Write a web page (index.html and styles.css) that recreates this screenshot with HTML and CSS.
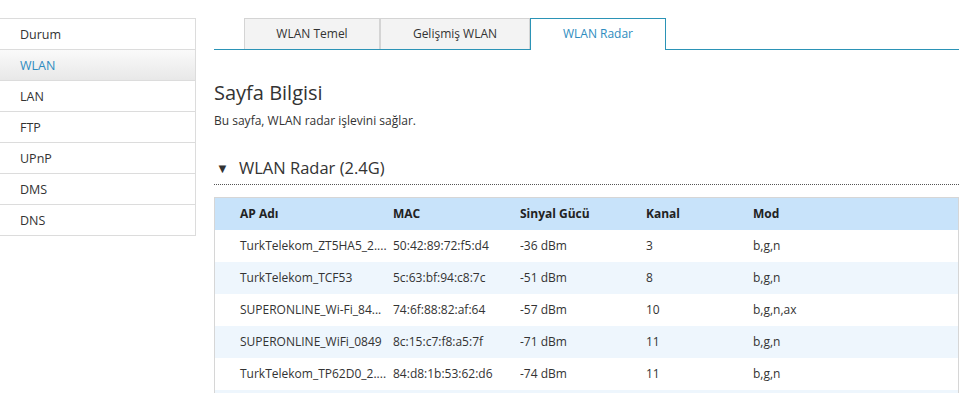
FILE: index.html
```html
<!DOCTYPE html>
<html lang="tr">
<head>
<meta charset="utf-8">
<title>WLAN Radar</title>
<link rel="stylesheet" href="styles.css">
</head>
<body>
<div class="page">
  <nav class="sidebar">
    <div class="nav-item">Durum</div>
    <div class="nav-item active">WLAN</div>
    <div class="nav-item">LAN</div>
    <div class="nav-item">FTP</div>
    <div class="nav-item">UPnP</div>
    <div class="nav-item">DMS</div>
    <div class="nav-item">DNS</div>
  </nav>
  <main class="main">
    <div class="tabs">
      <div class="tab tab-a">WLAN Temel</div>
      <div class="tab tab-b">Gelişmiş WLAN</div>
      <div class="tab tab-c active">WLAN Radar</div>
    </div>
    <h1 class="page-title">Sayfa Bilgisi</h1>
    <p class="page-desc">Bu sayfa, WLAN radar işlevini sağlar.</p>
    <div class="section-head">
      <span class="caret">&#9660;</span>
      <span class="section-title">WLAN Radar (2.4G)</span>
    </div>
    <div class="table">
      <div class="row head">
        <div class="c1">AP Adı</div><div class="c2">MAC</div><div class="c3">Sinyal Gücü</div><div class="c4">Kanal</div><div class="c5">Mod</div>
      </div>
      <div class="row">
        <div class="c1">TurkTelekom_ZT5HA5_2....</div><div class="c2">50:42:89:72:f5:d4</div><div class="c3">-36 dBm</div><div class="c4">3</div><div class="c5">b,g,n</div>
      </div>
      <div class="row alt">
        <div class="c1">TurkTelekom_TCF53</div><div class="c2">5c:63:bf:94:c8:7c</div><div class="c3">-51 dBm</div><div class="c4">8</div><div class="c5">b,g,n</div>
      </div>
      <div class="row">
        <div class="c1">SUPERONLINE_Wi-Fi_84...</div><div class="c2">74:6f:88:82:af:64</div><div class="c3">-57 dBm</div><div class="c4">10</div><div class="c5">b,g,n,ax</div>
      </div>
      <div class="row alt">
        <div class="c1">SUPERONLINE_WiFi_0849</div><div class="c2">8c:15:c7:f8:a5:7f</div><div class="c3">-71 dBm</div><div class="c4">11</div><div class="c5">b,g,n</div>
      </div>
      <div class="row">
        <div class="c1">TurkTelekom_TP62D0_2....</div><div class="c2">84:d8:1b:53:62:d6</div><div class="c3">-74 dBm</div><div class="c4">11</div><div class="c5">b,g,n</div>
      </div>
      <div class="row alt">
        <div class="c1">&nbsp;</div><div class="c2"></div><div class="c3"></div><div class="c4"></div><div class="c5"></div>
      </div>
    </div>
  </main>
</div>
</body>
</html>
```

FILE: styles.css
```css
html, body {
  margin: 0;
  padding: 0;
  background: #fff;
  overflow: hidden;
}
body {
  font-family: "Open Sans", "Noto Sans", sans-serif;
  font-size: 12px;
  color: #333;
}
.page {
  display: flex;
  align-items: flex-start;
  height: 393px;
  overflow: hidden;
}
.sidebar {
  width: 195px;
  margin-top: 18px;
  border: 1px solid #dcdcdc;
  border-left: none;
  flex-shrink: 0;
}
.nav-item {
  height: 30px;
  line-height: 31px;
  padding-left: 20px;
  border-bottom: 1px solid #dcdcdc;
  color: #333;
  font-size: 12.5px;
}
.nav-item:last-child {
  border-bottom: none;
}
.nav-item.active {
  color: #2e8cc0;
  background: linear-gradient(#fafafa, #e8e8e8);
}
.main {
  margin-left: 18px;
  width: 745px;
}
.tabs {
  margin-top: 18px;
  height: 31px;
  padding-left: 30px;
  border-bottom: 1px solid #2b93b6;
  display: flex;
}
.tab {
  height: 30px;
  line-height: 30px;
  text-align: center;
  background: #f3f3f3;
  border: 1px solid #d4d4d4;
  border-bottom: none;
  color: #333;
}
.tab-a { width: 134px; }
.tab-b { width: 148px; border-left: 1px solid #d4d4d4; }
.tab-c { width: 134px; }
.tab.active {
  background: #fff;
  border: 1px solid #2b93b6;
  border-bottom: none;
  height: 31px;
  margin-bottom: -1px;
  color: #2e8cc0;
}
.page-title {
  margin: 29px 0 0 0;
  font-weight: normal;
  font-size: 20px;
  line-height: 28px;
  color: #333;
}
.page-desc {
  margin: 5px 0 0 0;
  font-size: 12px;
  line-height: 18px;
  color: #333;
}
.section-head {
  margin-top: 21px;
  height: 34px;
  border-bottom: 1px dotted #555;
  display: flex;
  align-items: center;
  box-sizing: border-box;
}
.caret {
  font-size: 13px;
  color: #333;
  width: 25px;
  padding-left: 2px;
  box-sizing: border-box;
}
.section-title {
  font-size: 16.5px;
  color: #333;
}
.table {
  margin-top: 12px;
  border: 1px solid #d6d6d6;
  border-bottom: none;
}
.row {
  display: flex;
  height: 32px;
  line-height: 32px;
  background: #fff;
}
.row.alt {
  background: #eef6fd;
}
.row.head {
  background: #c8e3fa;
  font-weight: bold;
  color: #222;
}
.row > div {
  white-space: nowrap;
  overflow: hidden;
}
.c1 { width: 153px; padding-left: 25px; }
.c2 { width: 127px; }
.c3 { width: 126px; }
.c4 { width: 107px; }
.c5 { flex: 1; }
```
